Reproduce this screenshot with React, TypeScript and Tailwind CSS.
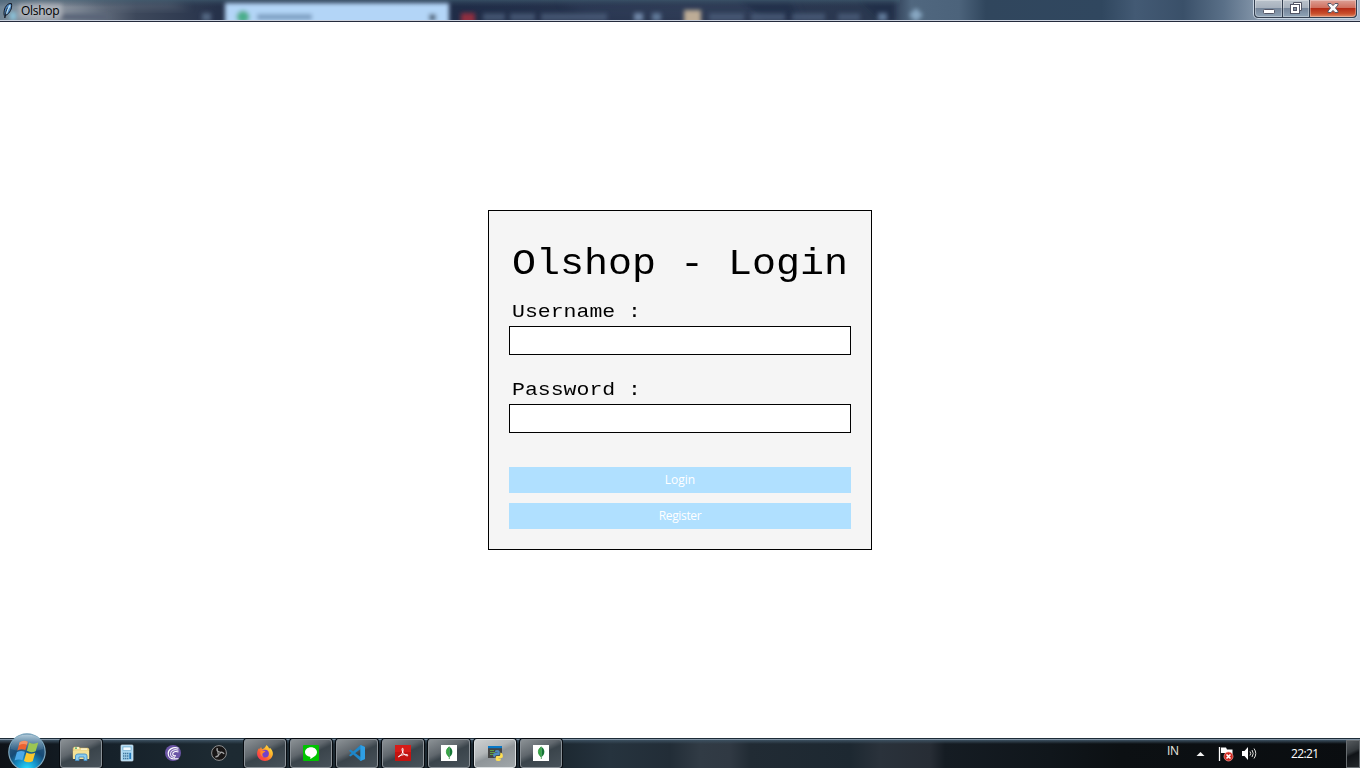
import React from 'react';

const ui = "font-['Open_Sans','Noto_Sans',sans-serif]";

function Feather() {
  return (
    <svg width="10" height="16" viewBox="0 0 10 16">
      <path d="M1.2 12.5C.6 9 1.3 5 3.6 2.5 5 1 6.6.3 8.4.5 9 3 8.6 5.6 7.4 7.6 6.4 9.6 5 11.3 3 12.2L2.2 12 1.6 14.8" fill="#4c86c0" stroke="#0b0f17" strokeWidth=".9" />
      <path d="M7.2 2.2C5.2 5 4 8 3.2 10.8" stroke="#b5def5" strokeWidth="1.6" fill="none" />
      <path d="M4.6 4.6C3.2 7 2.4 10 2 15" stroke="#10141c" strokeWidth=".8" fill="none" />
    </svg>
  );
}

function TitleBackdrop() {
  return (
    <svg className="absolute inset-0" width="1360" height="20" viewBox="0 0 1360 20">
      <defs>
        <linearGradient id="sky" x1="0" x2="1360" y1="0" y2="0" gradientUnits="userSpaceOnUse">
          <stop offset="0" stopColor="#6f8494" />
          <stop offset=".03" stopColor="#9aa1aa" />
          <stop offset=".06" stopColor="#77818f" />
          <stop offset=".1" stopColor="#3d485b" />
          <stop offset=".16" stopColor="#26324a" />
          <stop offset=".34" stopColor="#1f2c47" />
          <stop offset=".5" stopColor="#2b3750" />
          <stop offset=".655" stopColor="#2a3850" />
          <stop offset=".67" stopColor="#50677f" />
          <stop offset=".705" stopColor="#4c637b" />
          <stop offset=".725" stopColor="#30465d" />
          <stop offset=".81" stopColor="#30475f" />
          <stop offset=".835" stopColor="#435a74" />
          <stop offset=".87" stopColor="#3a5069" />
          <stop offset=".9" stopColor="#5a7088" />
          <stop offset=".925" stopColor="#8496aa" />
          <stop offset="1" stopColor="#a8b8cc" />
        </linearGradient>
        <linearGradient id="topShade" x1="0" x2="0" y1="0" y2="1">
          <stop offset="0" stopColor="#405d70" stopOpacity=".65" />
          <stop offset=".35" stopColor="#304258" stopOpacity="0" />
        </linearGradient>
        <filter id="soft" x="-20%" y="-60%" width="140%" height="220%"><feGaussianBlur stdDeviation="2" /></filter>
        <filter id="wide" x="-30%" y="-60%" width="160%" height="220%"><feGaussianBlur stdDeviation="5" /></filter>
      </defs>
      <rect width="1360" height="20" fill="url(#sky)" />
      <path d="M560 0H790L800 20H590ZM650 0" fill="#344562" opacity=".35" filter="url(#wide)" />
      <path d="M740 0H790L800 20H765ZM860 0H895V20H880Z" fill="#1b2945" filter="url(#soft)" opacity=".6" />
      <path d="M100 0H170L190 8H120Z" fill="#687584" filter="url(#wide)" opacity=".6" />
      <rect width="900" height="20" fill="url(#topShade)" />
      <g filter="url(#soft)">
        <rect x="225" y="3" width="224" height="22" fill="#b3d5f7" />
        <circle cx="243" cy="17" r="6.5" fill="#4bae8c" />
        <rect x="429" y="14" width="7" height="7" fill="#52677f" />
        <rect x="461" y="13" width="14" height="12" fill="#8f2f40" />
        <rect x="684" y="10" width="17" height="15" fill="#bdac96" />
        <rect x="202" y="13" width="9" height="8" fill="#536681" />
        <rect x="634" y="13" width="9" height="8" fill="#7188a8" />
        <rect x="652" y="13" width="9" height="8" fill="#617898" />
        <rect x="878" y="13" width="9" height="8" fill="#617898" />
        <path d="M910 15H922M916 9V21" stroke="#89a9c4" strokeWidth="5" />
        <path d="M483 17H505M510 17H535M541 17H607M709 17H744M751 17H785M792 17H825M838 17H860" stroke="#4d607c" strokeWidth="7" opacity=".8" />
        <path d="M60 17H108" stroke="#596477" strokeWidth="6" />
        <path d="M257 17H312" stroke="#7d9fc2" strokeWidth="6" />
        <path d="M10 16H16" stroke="#8ac5dd" strokeWidth="8" />
        <path d="M19 11H62" stroke="#b6b9c0" strokeWidth="14" opacity=".7" />
      </g>
    </svg>
  );
}

function WindowControls() {
  return (
    <div className="relative mr-[2px] flex h-[19px] w-[105px] rounded-b-[5px] border border-t-0 border-[#c8d5e2] bg-[#333f50] px-px pb-px">
      <div className="flex w-[27px] items-center justify-center rounded-bl-[4px] bg-[linear-gradient(#b9c2cb_0,#a7b1bd_45%,#76869a_50%,#8fa3b6_100%)] shadow-[inset_0_0_0_1px_#ffffff55]">
        <svg width="14" height="16" viewBox="0 0 14 16"><rect x="1.5" y="8.5" width="11" height="4" rx="1" fill="#fff" stroke="#535666" /></svg>
      </div>
      <div className="ml-px flex w-[26px] items-center justify-center bg-[linear-gradient(#b9c2cb_0,#a7b1bd_45%,#76869a_50%,#8fa3b6_100%)] shadow-[inset_0_0_0_1px_#ffffff55]">
        <svg className="relative -top-px" width="14" height="16" viewBox="0 0 14 16">
          <path d="M4.500 2.500H12.500V10.500H10V5H4.500Z" fill="#fff" stroke="#535666" />
          <rect x="1.500" y="4.500" width="9" height="9" fill="#fff" stroke="#535666" />
          <rect x="4.500" y="7.500" width="3" height="3" fill="#8492a4" stroke="#535666" />
        </svg>
      </div>
      <div className="ml-px flex flex-1 items-center justify-center rounded-br-[4px] bg-[linear-gradient(#dda096_0,#cf705f_45%,#b52c17_50%,#c94f2c_80%,#df8b68_100%)] shadow-[inset_0_0_0_1px_#ffffff50]">
        <svg className="relative -top-px" width="14" height="16" viewBox="0 0 14 16">
          <path d="M2 3.500H5L7 5.600 9 3.500H12V5L9.500 8 12 11V12.500H9L7 10.400 5 12.500H2V11L4.500 8 2 5Z" fill="#fafafa" stroke="#535666" />
        </svg>
      </div>
    </div>
  );
}

function StartOrb() {
  return (
    <svg className="absolute left-[7px] top-[-7px]" width="40" height="37" viewBox="0 0 40 37">
      <defs>
        <radialGradient id="orb" cx=".5" cy=".98" r=".85">
          <stop offset="0" stopColor="#2de0ff" />
          <stop offset=".35" stopColor="#1490c8" />
          <stop offset=".65" stopColor="#174a75" />
          <stop offset="1" stopColor="#2f5c80" />
        </radialGradient>
        <linearGradient id="orbShine" x1="0" x2="0" y1="0" y2="1">
          <stop offset="0" stopColor="#d5e8f2" stopOpacity=".8" />
          <stop offset="1" stopColor="#7ea7bf" stopOpacity=".15" />
        </linearGradient>
      </defs>
      <circle cx="20" cy="20" r="18.2" fill="url(#orb)" stroke="#7fa9c0" strokeWidth="1.2" />
      <path d="M3.500 17C4 7 12 2.500 20 2.500S36 7 36.500 17C28 20 12 20 3.500 17Z" fill="url(#orbShine)" />
      <g transform="translate(-1.500 -2.500) scale(1.130)">
        <path d="M12.500 11.300Q16 8.800 19.700 10.800L17.600 18.200Q14 16.600 10.500 18.600Z" fill="#ec6330" />
        <path d="M20.900 11.500Q25 13.600 29 11.600L26.700 19.200Q22.800 21 18.900 18.900Z" fill="#9cc653" />
        <path d="M10.100 20Q13.600 18 17.200 19.700L15 27.200Q11.600 25.600 8 27.500Z" fill="#4ba8e8" />
        <path d="M18.500 20.400Q22.500 22.400 26.300 20.600L24.100 28.200Q20.200 30 16.300 27.900Z" fill="#fbc72c" />
        <path d="M12.500 11.300Q16 8.800 19.700 10.800L19 13.500Q15 12 11.700 14.200Z" fill="#fbb58c" opacity=".6" />
      </g>
    </svg>
  );
}

function Glyph({ children }: { children: React.ReactNode }) {
  return <svg className="relative -top-px" width="18" height="18" viewBox="-1 -1 18 18">{children}</svg>;
}

const Explorer = () => (
  <Glyph>
    <path d="M0 3.500L1 2H6L7 3H15L16 4V13.500H0Z" fill="#efd98a" stroke="#cfae5b" strokeWidth=".5" />
    <path d="M1.500 3H6M8 4.200H14" stroke="#fff9dc" strokeWidth="1.300" />
    <path d="M2 3.200H4" stroke="#3da757" strokeWidth="1.200" />
    <path d="M0 6H16V14H0Z" fill="#f5e195" />
    <path d="M2.500 15.500V11Q2.500 9 5 9H12Q14 9 14 11V15.500H11V12H6V15.500Z" fill="#8ccdef" stroke="#4690c5" strokeWidth=".9" />
  </Glyph>
);
const Calculator = () => (
  <Glyph>
    <rect x="2" y="0" width="12" height="16" rx=".8" fill="#a9d5ee" stroke="#dceffa" strokeWidth=".7" />
    <rect x="4" y="2" width="8" height="3.500" fill="#f3fbff" stroke="#4d94bd" strokeWidth=".5" />
    <path d="M4 8.500H9.500M4 11H9.500M4 13.500H9.500" stroke="#43799f" strokeWidth="1.500" strokeDasharray="1.400 .6" />
    <path d="M11.200 7.800V14" stroke="#257abb" strokeWidth="1.800" />
  </Glyph>
);
const Torrent = () => (
  <Glyph>
    <circle cx="8" cy="8" r="8" fill="#6b55a5" />
    <path d="M13.500 3.300C8 1.500 3.200 4.300 3.200 8.500c0 3.500 2.800 5.500 6 5.500" stroke="#fff" strokeWidth="1.200" fill="none" />
    <path d="M13.500 5.200C9 3.600 5.500 5.600 5.500 8.700c0 2.400 2 3.700 4.500 3.700" stroke="#e7e0f4" strokeWidth="1.100" fill="none" />
    <path d="M13.500 7.100C10.500 5.700 7.700 6.900 7.700 9c0 1.300 1.200 2 3.300 1.900M9 13.900l4.500-.2" stroke="#fff" strokeWidth="1.100" fill="none" />
  </Glyph>
);
const Obs = () => (
  <Glyph>
    <circle cx="8" cy="8" r="7.400" fill="#171515" stroke="#8f9091" strokeWidth="1" />
    <path d="M8 7.200C6.200 6.700 5.600 4.800 6.400 3.200M8.800 8C10.300 6.700 12.200 7.300 13 9M7.700 8.900C7.700 10.800 6.300 11.900 4.400 11.700" stroke="#a0a1a2" strokeWidth="1.500" fill="none" />
    <circle cx="8" cy="8" r="1.700" fill="#a0a1a2" />
    <circle cx="8" cy="8" r=".7" fill="#171515" />
  </Glyph>
);
const Firefox = () => (
  <Glyph>
    <defs>
      <linearGradient id="fox" x1="1" x2="0" y1="0" y2="1">
        <stop offset="0" stopColor="#fff04d" /><stop offset=".35" stopColor="#ffb52b" /><stop offset=".65" stopColor="#ff5a35" /><stop offset="1" stopColor="#f32368" />
      </linearGradient>
    </defs>
    <path d="M9.500 0C11 1.200 11.500 2.300 12 3.500L13.200 3C15.200 5 16 7 15.900 9 15.500 13 12 16 8 16S.3 13 .1 9C0 6.500.8 4.500 2.200 3L2.700 4.500 4 2 5 4.300C7 4 8 2.500 9.500 0Z" fill="url(#fox)" />
    <circle cx="8" cy="8.600" r="3.900" fill="#7341c9" />
    <path d="M3.500 6.500C5 4.800 7 5.300 8.500 6.400L6.500 7.700C4.800 8.500 5 11 7 12.300C4.500 12 3 10 3.500 6.500Z" fill="#ff872c" />
  </Glyph>
);
const Line = () => (
  <Glyph>
    <rect width="16" height="16" rx="1" fill="#00c300" />
    <path d="M8 2.300C4.500 2.300 2 4.500 2 7.200 2 9.600 4.300 11.400 7 11.700 7.700 12 7.300 13 7.200 14 10 12.700 14 10.200 14 7.200 14 4.500 11.500 2.300 8 2.300Z" fill="#fff" />
  </Glyph>
);
const Code = () => (
  <Glyph>
    <path d="M11.500 0L16 2V14L11.500 16 0 5.800 1.500 4.500 11.500 12V4L1.500 11.500 0 10.200Z" fill="#1d87ca" />
    <path d="M11.500 0L16 2V14L11.500 16Z" fill="#2f9fe4" />
  </Glyph>
);
const Pdf = () => (
  <Glyph>
    <rect width="16" height="16" fill="#c31310" />
    <path d="M0 0H16V7H0Z" fill="#d61c18" />
    <path d="M3.200 12C7 10 8.600 6.500 8 3.500 7 2.500 6.500 5 8 7.500 9.500 10 12 11.500 13 10.500 13.300 9 7 9.200 3.500 11.500" stroke="#fff" strokeWidth="1" fill="none" />
  </Glyph>
);
const Mongo = () => (
  <Glyph>
    <rect width="16" height="16" fill="#fff" />
    <path d="M8.300 1.700C4.600 4.300 4.200 8.500 8.300 12.200V14" fill="#38a846" stroke="#2a9139" strokeWidth=".8" />
    <path d="M8.300 1.700C12.400 4.500 12.400 9 8.300 12.200Z" fill="#167736" />
  </Glyph>
);
const Python = () => (
  <Glyph>
    <rect x="1" y="1" width="14" height="12" fill="#454545" />
    <rect x="1" y="1" width="14" height="2.200" fill="#0878c7" />
    <path d="M3 5.500H7M3 7.500H8M3 9.500H6" stroke="#5ca246" />
    <path d="M6 9.500Q6 8 8 8H10.500V7.400H8V6.300Q8 5 10.300 5T12.700 6.500V9Q12.700 10.300 11.400 10.300H9.300Q8 10.300 8 12.300H7.200Q6 12 6 9.500Z" fill="#4d8bbd" />
    <path d="M13.300 7.800H14.200Q16 8.500 15.900 11T14.200 13H11.500V13.600H13.800V14.500Q13.800 16 11.300 16T8.700 14.500V12.300Q8.700 11 10 11H12Q13.300 11 13.300 9.500Z" fill="#ffe052" />
  </Glyph>
);

const apps = [
  { name: 'Explorer', Icon: Explorer, kind: 'open' },
  { name: 'Calculator', Icon: Calculator, kind: 'pinned' },
  { name: 'BitTorrent', Icon: Torrent, kind: 'pinned' },
  { name: 'OBS', Icon: Obs, kind: 'pinned' },
  { name: 'Firefox', Icon: Firefox, kind: 'open' },
  { name: 'Line', Icon: Line, kind: 'open' },
  { name: 'Code', Icon: Code, kind: 'open' },
  { name: 'Pdf', Icon: Pdf, kind: 'open' },
  { name: 'Mongo', Icon: Mongo, kind: 'open' },
  { name: 'Python', Icon: Python, kind: 'active' },
  { name: 'Compass', Icon: Mongo, kind: 'open' },
];

const kinds: Record<string, string> = {
  pinned: 'border-transparent',
  open: 'border-[#8b9298] bg-[linear-gradient(155deg,#8b9195_0,#60676d_38%,#3a444b_52%,#48525a_100%)] shadow-[0_0_0_1px_#070b10]',
  active: 'border-[#d9dddf] bg-[linear-gradient(155deg,#cdd0d1_0,#b2b6b8_38%,#8f9599_52%,#a1a7aa_100%)] shadow-[0_0_0_1px_#070b10]',
};

function Taskbar() {
  return (
    <footer className="relative flex h-[30px] shrink-0 border-t border-[#1d2c38] bg-[linear-gradient(90deg,#0e1217_0,#16212a_110px,#1d2a32_220px,#1c2831_560px,#26333e_610px,#222d37_670px,#313b45_700px,#303943_730px,#212b34_750px,#1d2831_850px,#2a323b_880px,#272d35_930px,#151c23_945px,#10161b_1050px,#0c1013_1120px,#0a0d10_100%)]">
      <div className="absolute inset-x-0 top-0 h-[5px] bg-[linear-gradient(#8193a4_0,#8193a4_1px,#3c5060_1px,#2a3b4a00_5px)]" />
      <StartOrb />
      <div className="relative ml-[60px] flex gap-1">
        {apps.map(({ name, Icon, kind }) => (
          <div key={name} className={`flex h-[29px] w-[42px] items-center justify-center rounded-[3px] border ${kinds[kind]}`}>
            <Icon />
          </div>
        ))}
      </div>
      <div className={`relative ml-auto flex h-[29px] items-center text-[12px] text-white ${ui}`}>
        <span className="mr-[17px] w-[12px] -translate-y-[3px] tracking-[-0.4px] text-[#e8e8e0]">IN</span>
        <svg className="mr-[13px]" width="9" height="6" viewBox="0 0 9 6"><path d="M.5 5L4.500 1 8.500 5Z" fill="#f4f4f4" /></svg>
        <svg className="mr-[7px]" width="17" height="17" viewBox="0 0 17 17">
          <path d="M1.500 2V16" stroke="#fff" strokeWidth="1.300" />
          <path d="M3 2.500H8L9 4.500H14.500V9H8L7 8H3Z" fill="#fff" />
          <circle cx="10.500" cy="11.500" r="4.500" fill="#d32a22" stroke="#f8a29b" strokeWidth=".7" />
          <path d="M8.500 9.500L12.500 13.500M12.500 9.500L8.500 13.500" stroke="#fff" strokeWidth="1.600" />
        </svg>
        <svg className="mr-[34px]" width="15" height="15" viewBox="0 0 15 15">
          <path d="M0 5H2.500L6 1V14L2.500 10H0Z" fill="#fff" />
          <path d="M8 5.500Q9.500 7.500 8 9.500M10 4Q12.500 7.500 10 11M12 2.500Q15.500 7.500 12 12.500" stroke="#dededb" strokeWidth="1" fill="none" />
        </svg>
        <span className="w-[27px] whitespace-nowrap tracking-[-0.65px]">22:21</span>
        <div className="ml-[28px] h-[28px] w-[14px] border border-[#686d71] bg-[linear-gradient(155deg,#555a5e_0,#33383c_40%,#101317_52%,#24282b_100%)]" />
      </div>
    </footer>
  );
}

const mono = "font-['Courier_New','Liberation_Mono',monospace] text-black";

function Field({ label, name }: { label: string; name: string }) {
  return (
    <label className="flex flex-col">
      <span className={`h-[26px] origin-[0_10px] scale-y-[0.88] pl-[3px] text-[21.5px] leading-[24px] ${mono}`}>{label}</span>
      <input name={name} type={name} className="h-[29px] w-full border border-black bg-white px-1 outline-none" />
    </label>
  );
}

export default function App() {
  const button = `h-[26px] w-full bg-[#b0e0ff] text-[12px] leading-[24px] text-white ${ui}`;
  return (
    <div className="flex h-[768px] w-[1360px] flex-col overflow-hidden bg-white">
      <header className="relative flex h-[22px] shrink-0 border-b border-[#252b3c] bg-[#cbd2de]">
        <TitleBackdrop />
        <div className="relative flex h-[21px] items-center pl-[3px]">
          <Feather />
          <span className={`ml-2 text-[12px] tracking-[-0.3px] text-black ${ui}`}>Olshop</span>
        </div>
        <div className="ml-auto"><WindowControls /></div>
      </header>
      <main className="flex flex-1 items-center justify-center bg-white">
        <form className="flex h-[340px] w-[384px] flex-col border border-black bg-[#f5f5f5] px-5 pt-[29px]">
          <h1 className={`mb-[15px] h-[45px] origin-[0_44px] scale-y-[0.9] whitespace-pre pl-[3px] text-[40px] font-normal leading-[45px] ${mono}`}>Olshop - Login</h1>
          <Field label="Username :" name="text" />
          <div className="h-[23px]" />
          <Field label="Password :" name="password" />
          <div className="mt-[34px] flex flex-col gap-[10px]">
            <button type="button" className={button}>Login</button>
            <button type="button" className={`${button} tracking-[-0.35px]`}>Register</button>
          </div>
        </form>
      </main>
      <Taskbar />
    </div>
  );
}
